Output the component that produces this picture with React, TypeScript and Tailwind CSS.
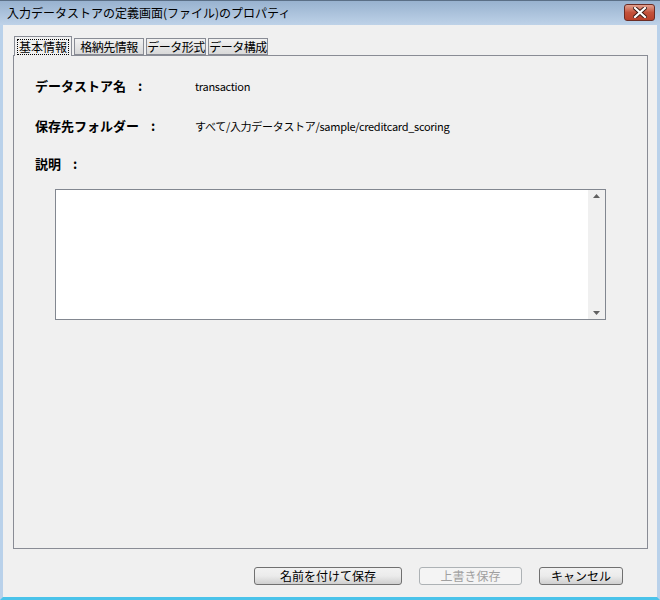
import React from 'react';

const font = "font-['Noto_Sans_CJK_JP','Noto_Sans',sans-serif]";

const tabs = [
  { label: '基本情報', w: 'w-[58px]' },
  { label: '格納先情報', w: 'w-[70px]' },
  { label: 'データ形式', w: 'w-[60px]' },
  { label: 'データ構成', w: 'w-[60px]' },
];

const fields = [
  { label: 'データストア名', value: 'transaction' },
  { label: '保存先フォルダー', value: 'すべて/入力データストア/sample/creditcard_scoring' },
];

const WinButton: React.FC<{ label: string; width: string; disabled?: boolean }> = ({ label, width, disabled }) => (
  <button
    disabled={disabled}
    className={`${width} h-[18px] rounded-[3px] border text-[12px] leading-none flex items-center justify-center ${
      disabled
        ? 'border-[#adb2b5] bg-[#f4f4f4] text-[#a0a0a0]'
        : 'border-[#707070] bg-gradient-to-b from-[#f2f2f2] via-[#ebebeb] to-[#cfcfcf] text-black'
    }`}
  >
    {label}
  </button>
);

export default function App() {
  return (
    <div className={`w-[660px] h-[600px] flex flex-col bg-[#6f8aa8] ${font}`}>
      {/* title bar */}
      <div className="h-[25px] flex items-center justify-between bg-gradient-to-b from-[#98b2cf] to-[#bed2e8] pl-[7px] pr-[5px] border-t border-[#5b6f86]">
        <span className="text-[12px] text-black leading-none">入力データストアの定義画面(ファイル)のプロパティ</span>
        <div className="w-[31px] h-[17px] -mt-[2px] rounded-[3px] border border-[#6b2c24] bg-gradient-to-b from-[#e0a190] via-[#c4523b] to-[#b8402a] flex items-center justify-center">
          <svg width="14" height="11" viewBox="0 0 14 11">
            <path d="M2 1 L12 10 M12 1 L2 10" stroke="#3b1a14" strokeWidth="4" strokeLinecap="square" />
            <path d="M2 1 L12 10 M12 1 L2 10" stroke="#ffffff" strokeWidth="2.2" strokeLinecap="square" />
          </svg>
        </div>
      </div>

      {/* window body */}
      <div className="flex-1 flex flex-col bg-[#f0f0f0] border-x-[3px] border-b-[3px] border-x-[#b9d1ea] border-b-[#4ac3ea]">
        <div className="flex-1 flex flex-col pl-[10px] pr-[9px] pt-[10px]">
          {/* tabs */}
          <div className="flex items-end h-[20px] gap-[2px] pl-px">
            {tabs.map((t, i) => (
              <div
                key={t.label}
                className={
                  i === 0
                    ? `${t.w} h-[20px] px-[2px] pt-[2px] bg-[#f0f0f0] border border-b-0 border-[#898c95] relative z-10 -mb-px`
                    : `${t.w} h-[17px] bg-gradient-to-b from-[#f2f2f2] to-[#d9d9d9] border border-[#898c95] text-[12px] leading-[15px] text-center tracking-[-0.5px]`
                }
              >
                {i === 0 ? (
                  <span className="text-[12px] leading-[14px] border border-dotted border-black block text-center">{t.label}</span>
                ) : (
                  t.label
                )}
              </div>
            ))}
          </div>

          {/* panel */}
          <div className="flex-1 border border-[#898c95] bg-[#f0f0f0] flex flex-col pl-[21px] pt-[20px] mb-[18px]">
            {fields.map((f) => (
              <div key={f.label} className="flex items-center h-[20px] mb-[20px]">
                <span className="w-[160px] font-bold text-[13px] flex items-center">
                  {f.label}
                  <span className="ml-[12px]">:</span>
                </span>
                <span className="text-[11px] tracking-[-0.3px]">{f.value}</span>
              </div>
            ))}
            <div className="flex items-center h-[16px] text-[13px] font-bold">
              説明<span className="ml-[12px]">:</span>
            </div>

            <div className="ml-[20px] mt-[17px] w-[551px] h-[131px] border border-[#828790] bg-white flex justify-end">
              <div className="w-[17px] h-full bg-[#f0f0f0] flex flex-col items-center justify-between py-[4px]">
                <svg width="7" height="4" viewBox="0 0 7 4">
                  <path d="M0 4 L3.5 0 L7 4 Z" fill="#606060" />
                </svg>
                <svg width="7" height="4" viewBox="0 0 7 4">
                  <path d="M0 0 L3.5 4 L7 0 Z" fill="#606060" />
                </svg>
              </div>
            </div>
          </div>

          {/* buttons */}
          <div className="flex justify-end gap-[17px] pr-[25px] pb-[12px]">
            <WinButton label="名前を付けて保存" width="w-[148px]" />
            <WinButton label="上書き保存" width="w-[103px]" disabled />
            <WinButton label="キャンセル" width="w-[84px]" />
          </div>
        </div>
      </div>
    </div>
  );
}
